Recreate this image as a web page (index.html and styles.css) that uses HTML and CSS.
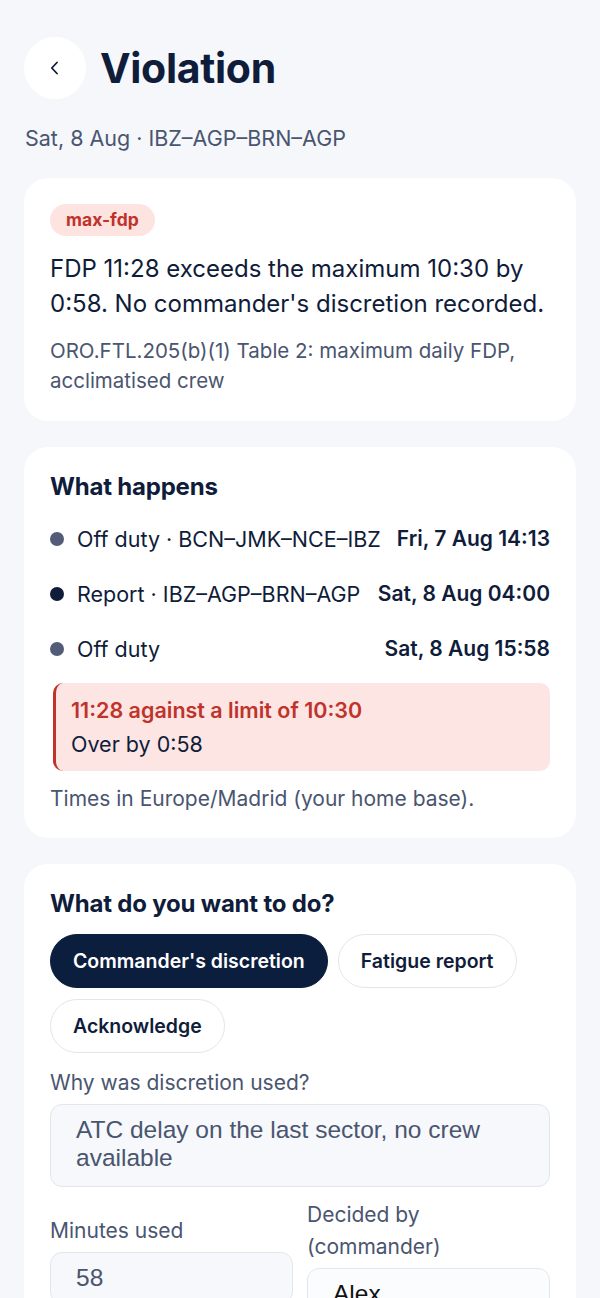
FILE: index.html
```html
<!DOCTYPE html>
<html>
<head>
  <title>Violation</title>
  <link rel="stylesheet" href="styles.css">
</head>
<body>
  <div class="page">
    <header class="top">
      <button class="back" type="button" aria-label="Back">
        <svg width="16" height="16" viewBox="0 0 16 16"><path d="M10 2.5 L4.8 8 L10 13.5" fill="none" stroke="#0f1c3a" stroke-width="1.8" stroke-linecap="round" stroke-linejoin="round"/></svg>
      </button>
      <h1>Violation</h1>
    </header>
    <p class="sub">Sat, 8 Aug · IBZ–AGP–BRN–AGP</p>

    <section class="card">
      <span class="badge">max-fdp</span>
      <p class="lead">FDP 11:28 exceeds the maximum 10:30 by 0:58. No commander's discretion recorded.</p>
      <p class="ref">ORO.FTL.205(b)(1) Table 2: maximum daily FDP, acclimatised crew</p>
    </section>

    <section class="card">
      <h2>What happens</h2>
      <ul class="timeline">
        <li><span class="dot"></span><span class="what">Off duty · BCN–JMK–NCE–IBZ</span><span class="when">Fri, 7 Aug 14:13</span></li>
        <li><span class="dot dark"></span><span class="what">Report · IBZ–AGP–BRN–AGP</span><span class="when">Sat, 8 Aug 04:00</span></li>
        <li><span class="dot"></span><span class="what">Off duty</span><span class="when">Sat, 8 Aug 15:58</span></li>
      </ul>
      <div class="alert">
        <div class="alert-title">11:28 against a limit of 10:30</div>
        <div>Over by 0:58</div>
      </div>
      <p class="note">Times in Europe/Madrid (your home base).</p>
    </section>

    <section class="card">
      <h2>What do you want to do?</h2>
      <div class="choices">
        <button class="chip active" type="button">Commander's discretion</button>
        <button class="chip" type="button">Fatigue report</button>
        <button class="chip" type="button">Acknowledge</button>
      </div>
      <label class="field-label" for="why">Why was discretion used?</label>
      <textarea id="why" rows="2">ATC delay on the last sector, no crew available</textarea>
      <div class="pair">
        <div class="field">
          <label class="field-label" for="mins">Minutes used</label>
          <input id="mins" type="text" value="58">
        </div>
        <div class="field">
          <label class="field-label" for="who">Decided by (commander)</label>
          <input id="who" type="text" value="Alex">
        </div>
      </div>
    </section>
  </div>
</body>
</html>
```

FILE: styles.css
```css
body {
  margin: 0;
  background-color: #f5f7fb;
  font-family: Inter, "Noto Sans", sans-serif;
  color: #0f1c3a;
}

.page {
  padding: 37px 24px 40px;
}

.top {
  display: flex;
  align-items: center;
  gap: 14px;
}

.back {
  width: 62px;
  height: 62px;
  border-radius: 50%;
  border: none;
  background-color: #fff;
  display: flex;
  align-items: center;
  justify-content: center;
  padding: 0;
}

h1 {
  margin: 0;
  font-size: 41px;
  font-weight: 700;
  letter-spacing: -0.3px;
}

.sub {
  margin: 26px 0 27px 1px;
  font-size: 21.5px;
  line-height: 26px;
  color: #4a5570;
}

.card {
  background-color: #fff;
  border-radius: 24px;
  padding: 26px 26px 25px;
  margin-bottom: 26px;
}

.badge {
  display: inline-block;
  background-color: #fde4e1;
  color: #c0332b;
  font-weight: 700;
  font-size: 17.5px;
  line-height: 20px;
  padding: 6px 16px;
  border-radius: 16px;
}

.lead {
  margin: 14.5px 0 15.5px;
  font-size: 24px;
  line-height: 35px;
  font-weight: 400;
}

.ref {
  margin: 0;
  font-size: 20.5px;
  line-height: 30px;
  color: #4a5570;
}

h2 {
  margin: 0 0 10px;
  font-size: 24px;
  line-height: 28px;
  font-weight: 700;
  letter-spacing: -0.2px;
}

.timeline {
  list-style: none;
  margin: 0;
  padding: 0;
}

.timeline li {
  display: flex;
  align-items: center;
  height: 55px;
  font-size: 21.5px;
}

.dot {
  width: 14px;
  height: 14px;
  border-radius: 50%;
  background-color: #525c78;
  margin-right: 13px;
}

.dot.dark {
  background-color: #0f1c3a;
}

.what {
  flex: 1;
}

.when {
  font-weight: 600;
  font-size: 21px;
}

.alert {
  margin: 6.5px 0 0 3px;
  background-color: #fce5e3;
  border-left: 3px solid #c0332b;
  border-radius: 10px;
  padding: 10px 15px;
  font-size: 21.5px;
  line-height: 34px;
}

.alert-title {
  color: #c0332b;
  font-weight: 600;
}

.note {
  margin: 14px 0 0;
  font-size: 21px;
  line-height: 28px;
  color: #4a5570;
}

.choices {
  display: flex;
  flex-wrap: wrap;
  gap: 11px 10px;
  margin: 16px 0 14px;
}

.chip {
  font-family: Inter, sans-serif;
  font-size: 19.5px;
  font-weight: 600;
  color: #0f1c3a;
  background-color: #fff;
  border: 1px solid #e2e6ee;
  border-radius: 27px;
  height: 54px;
  padding: 0 22px;
}

.chip.active {
  background-color: #0c1e3e;
  border-color: #0c1e3e;
  color: #fff;
}

.field-label {
  display: block;
  font-size: 21px;
  line-height: 32px;
  color: #4a5570;
  margin-bottom: 5px;
}

textarea,
input {
  box-sizing: border-box;
  width: 100%;
  background-color: #f6f8fb;
  border: 1px solid #e2e6ee;
  border-radius: 12px;
  font-family: "Liberation Sans", Arial, sans-serif;
  font-size: 24.5px;
  color: #4a5570;
  padding: 11px 25px;
}

textarea {
  display: block;
  resize: none;
  line-height: 28px;
  height: 83px;
  margin-bottom: 12px;
}

input {
  display: block;
  line-height: 28px;
  height: 52px;
}

#who {
  color: #111;
  background-color: #fbfcfd;
}

.pair {
  display: grid;
  grid-template-columns: 1fr 1fr;
  gap: 14px;
  align-items: center;
}
```
